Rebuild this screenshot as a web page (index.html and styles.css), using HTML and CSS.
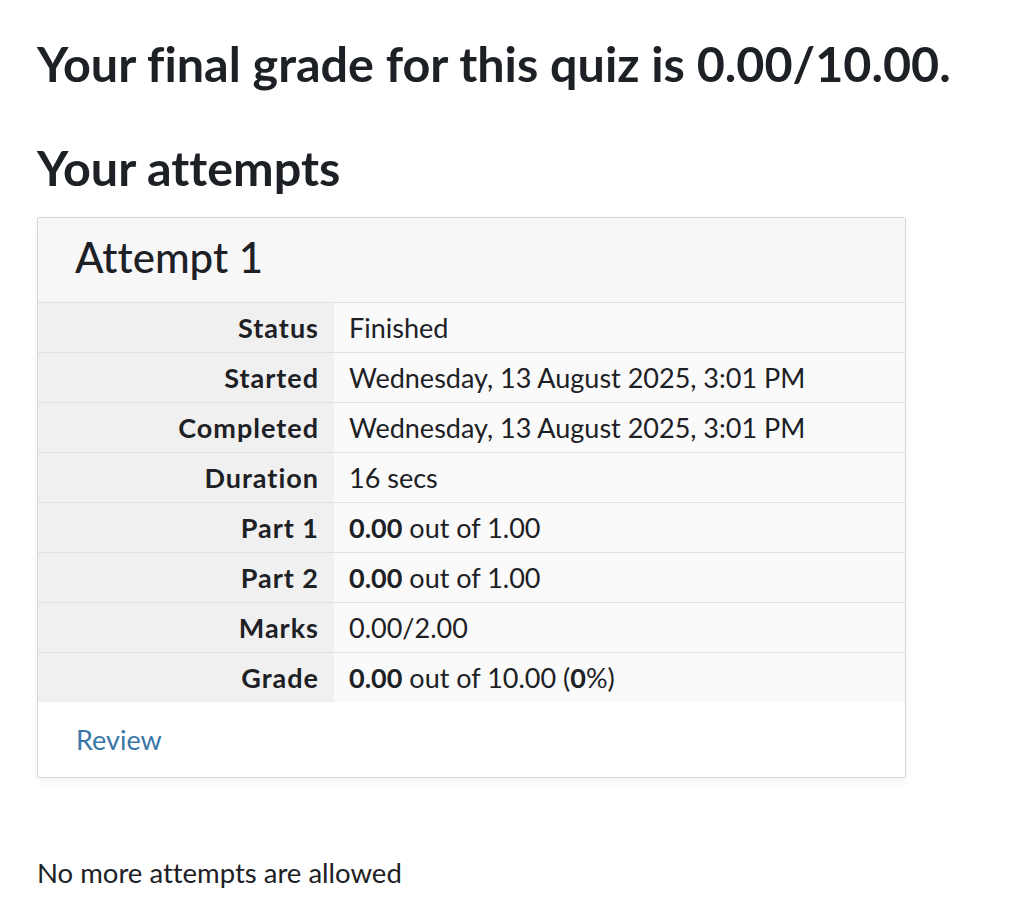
FILE: index.html
```html
<!DOCTYPE html>
<html lang="en">
<head>
<meta charset="utf-8">
<title>Quiz summary</title>
<link rel="stylesheet" href="styles.css">
</head>
<body>
<main class="page">
  <h2 class="grade">Your final grade for this quiz is 0.00/10.00.</h2>
  <h2 class="attempts-title">Your attempts</h2>
  <section class="card">
    <div class="card-header"><h3>Attempt 1</h3></div>
    <table class="summary">
      <tbody>
        <tr><th>Status</th><td>Finished</td></tr>
        <tr><th>Started</th><td>Wednesday, 13 August 2025, 3:01 PM</td></tr>
        <tr><th>Completed</th><td>Wednesday, 13 August 2025, 3:01 PM</td></tr>
        <tr><th>Duration</th><td>16 secs</td></tr>
        <tr><th>Part 1</th><td><b>0.00</b> out of 1.00</td></tr>
        <tr><th>Part 2</th><td><b>0.00</b> out of 1.00</td></tr>
        <tr><th>Marks</th><td>0.00/2.00</td></tr>
        <tr><th>Grade</th><td><b>0.00</b> out of 10.00 (<b>0</b>%)</td></tr>
      </tbody>
    </table>
    <div class="card-footer"><a href="#" class="review">Review</a></div>
  </section>
  <p class="note">No more attempts are allowed</p>
</main>
</body>
</html>
```

FILE: styles.css
```css
html, body {
  margin: 0;
  padding: 0;
  background: #ffffff;
}
body {
  font-family: Lato, "Liberation Sans", sans-serif;
  color: #1d2125;
  font-size: 27px;
  font-variant-ligatures: none;
  font-feature-settings: "liga" 0, "clig" 0, "dlig" 0;
}
.page {
  padding: 34px 0 0 37px;
}
h2 {
  margin: 0;
  font-size: 48.5px;
  font-weight: 700;
  line-height: 1.2;
  white-space: nowrap;
}
.grade {
  margin-bottom: 46px;
}
.attempts-title {
  margin-bottom: 21px;
}
.card {
  width: 867px;
  border: 1px solid #d3d5d8;
  border-radius: 2px;
  box-shadow: 0 4px 8px rgba(0, 0, 0, 0.05);
  background: #ffffff;
}
.card-header {
  background: #f7f7f7;
  border-bottom: 1px solid #dfe2e5;
  height: 85px;
  box-sizing: border-box;
  display: flex;
  align-items: center;
  padding: 0 0 6px 37px;
}
.card-header h3 {
  margin: 0;
  font-size: 42px;
  font-weight: 500;
  line-height: 1;
}
.summary {
  width: 100%;
  border-collapse: collapse;
}
.summary th,
.summary td {
  height: 49px;
  padding: 0 15px;
  vertical-align: middle;
  line-height: 1;
}
.summary tr + tr th,
.summary tr + tr td {
  border-top: 1px solid #dee2e6;
}
.summary th {
  width: 266px;
  text-align: right;
  font-weight: 700;
  letter-spacing: 1px;
  background: #f0f0f0;
  padding-right: 15px;
}
.summary td {
  background: #fafafa;
  text-align: left;
}
.card-footer {
  height: 75px;
  display: flex;
  align-items: center;
  padding-left: 38px;
}
.review {
  color: #3a77a6;
  text-decoration: none;
}
.note {
  margin: 78px 0 0 0;
  font-size: 27.5px;
  line-height: 1.2;
}
```
